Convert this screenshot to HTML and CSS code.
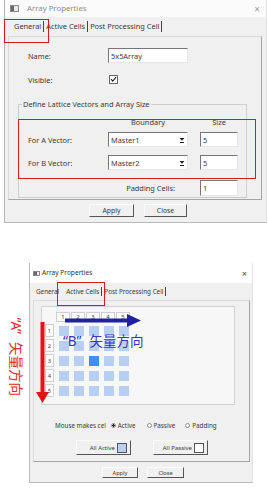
FILE: index.html
```html
<!DOCTYPE html>
<html>
<head>
<meta charset="utf-8">
<title>Array Properties</title>
<link rel="stylesheet" href="styles.css">
</head>
<body>
<div class="page">
  <div class="dlg dlg1">
    <div class="tb">
      <span class="ico"></span><span class="ttl">Array Properties</span><span class="x">×</span>
    </div>
    <div class="tabs">
      <span class="tab">General</span><span class="tab">Active Cells</span><span class="tab">Post Processing Cell</span>
    </div>
    <div class="panel">
      <div class="row"><span class="lbl">Name:</span><span class="inp w80">5x5Array</span></div>
      <div class="row vis"><span class="lbl">Visible:</span><span class="chk"><svg width="7" height="7" viewBox="0 0 7 7"><path d="M1 3.2 L2.8 5.2 L6 1.2" fill="none" stroke="#222" stroke-width="1.1"/></svg></span></div>
      <fieldset class="group">
        <legend>Define Lattice Vectors and Array Size</legend>
        <div class="grow ghead"><span></span><span class="ctr">Boundary</span><span class="ctr">Size</span></div>
        <div class="grow ga">
          <span>For A Vector:</span>
          <span class="inp combo">Master1<svg class="dd" width="6" height="6" viewBox="0 0 6 6"><path d="M0.5 1 H5.5 L3 3.8 Z" fill="#222"/><rect x="1" y="5" width="4" height="1" fill="#222"/></svg></span>
          <span class="inp">5</span>
        </div>
        <div class="grow gb">
          <span>For B Vector:</span>
          <span class="inp combo">Master2<svg class="dd" width="6" height="6" viewBox="0 0 6 6"><path d="M0.5 1 H5.5 L3 3.8 Z" fill="#222"/><rect x="1" y="5" width="4" height="1" fill="#222"/></svg></span>
          <span class="inp">5</span>
        </div>
        <div class="grow gp">
          <span class="padl">Padding Cells:</span>
          <span class="inp tall">1</span>
        </div>
      </fieldset>
    </div>
    <div class="btns b1">
      <span class="btn w45">Apply</span><span class="btn w43">Close</span>
    </div>
  </div>

  <div class="dlg dlg2">
    <div class="tb">
      <span class="ico"></span><span class="ttl">Array Properties</span><span class="x">×</span>
    </div>
    <div class="tabs">
      <span class="tab nob">General</span><span class="tab">Active Cells</span><span class="tab">Post Processing Cell</span>
    </div>
    <div class="panel">
      <div class="gridbox">
        <div class="cg">
          <span></span><span class="ch">1</span><span class="ch">2</span><span class="ch">3</span><span class="ch">4</span><span class="ch">5</span>
          <span class="rh">1</span><span class="c"></span><span class="c"></span><span class="c"></span><span class="c"></span><span class="c"></span>
          <span class="rh">2</span><span class="c"></span><span class="c"></span><span class="c"></span><span class="c"></span><span class="c"></span>
          <span class="rh">3</span><span class="c"></span><span class="c"></span><span class="c on"></span><span class="c"></span><span class="c"></span>
          <span class="rh">4</span><span class="c"></span><span class="c"></span><span class="c"></span><span class="c"></span><span class="c"></span>
          <span class="rh">5</span><span class="c"></span><span class="c"></span><span class="c"></span><span class="c"></span><span class="c"></span>
        </div>
      </div>
      <div class="radios">
        <span>Mouse makes cel</span>
        <span class="rad ra"><span class="circ sel"></span>Active</span>
        <span class="rad rp"><span class="circ"></span>Passive</span>
        <span class="rad rd"><span class="circ"></span>Padding</span>
      </div>
      <div class="allbtns">
        <span class="btn abtn">All Active<span class="sw blue"></span></span>
        <span class="btn abtn">All Passive<span class="sw"></span></span>
      </div>
    </div>
    <div class="btns b2">
      <span class="btn w36">Apply</span><span class="btn w37">Close</span>
    </div>
  </div>

  <span class="redbox r1"></span>
  <span class="redbox r2"></span>
  <span class="redbox r3"></span>

  <svg class="barrow" width="78" height="13" viewBox="0 0 78 13"><rect x="1" y="4.5" width="64" height="4" fill="#1f1fa6"/><path d="M63 0 L77 6.5 L63 13 Z" fill="#1f1fa6"/></svg>
  <svg class="rarrow" width="13" height="81" viewBox="0 0 13 81"><rect x="4.5" y="0" width="4" height="72" fill="#e41414"/><path d="M0 70 L13 70 L6.5 81 Z" fill="#e41414"/></svg>
  <span class="btext">“B”<span class="cjk">矢量方向</span></span>
  <span class="atext">“A”<span class="cjk">矢量方向</span></span>
</div>
</body>
</html>
```
FILE: styles.css
```css
* { box-sizing: border-box; }
body { margin: 0; background: #fff; font-family: "Noto Sans", "Open Sans", sans-serif; color: #3a3a3a; }
.page { position: relative; width: 268px; height: 494px; overflow: hidden; }

.dlg { background: #f0f0f0; border-left: 1px solid #b9b9b9; border-bottom: 1px solid #b9b9b9; border-right: 1px solid #e2e2e2; }
.dlg1 { margin-left: 4px; width: 263px; height: 223px; font-size: 7.4px; }
.dlg2 { margin: 40px 0 0 29px; width: 224px; height: 220px; font-size: 6.3px; }

.tb { display: flex; align-items: center; background: #fbfbfb; }
.dlg1 .tb { height: 17px; padding: 0 6px 0 5px; }
.dlg2 .tb { height: 20px; padding: 0 5px 0 3px; background: #fff; }
.ico { display: block; border: 1px solid #8a8a8a; background: linear-gradient(to right, #666 0 3px, #e8e8e8 3px); }
.dlg1 .ico { width: 9px; height: 7px; margin-right: 8px; }
.dlg2 .ico { width: 7px; height: 5px; margin-right: 2px; }
.ttl { line-height: 1; }
.dlg1 .ttl { color: #8c8c8c; font-size: 7.8px; }
.dlg2 .ttl { color: #333; font-size: 6.6px; }
.x { margin-left: auto; line-height: 1; }
.dlg1 .x { color: #9a9a9a; font-size: 10px; }
.dlg2 .x { color: #444; font-size: 9px; }

.tabs { display: flex; align-items: center; }
.dlg1 .tabs { height: 19px; padding-left: 7px; }
.dlg2 .tabs { height: 17px; padding-left: 4px; }
.tab { padding: 0 2px; border-right: 1px solid #444; line-height: 11px; }
.dlg2 .tab { line-height: 9px; }
.tab.nob { border-right: none; margin-right: 3px; }

.panel { background: #f0f0f0; border: 1px solid #dadada; border-right-color: #a4a4a4; border-bottom-color: #a4a4a4; }
.dlg1 .panel { margin-left: 3px; width: 254px; height: 164px; padding: 11px 0 0 9px; }
.dlg2 .panel { margin-left: 3px; width: 217px; height: 162px; padding: 2px 0 0 7px; }

.row { display: flex; align-items: center; height: 15px; padding-left: 10px; }
.row.vis { margin-top: 9px; }
.lbl { width: 80px; }
.inp { height: 15px; background: #fff; border: 1px solid; border-color: #767676 #e6e6e6 #e6e6e6 #767676; padding-left: 2px; display: flex; align-items: center; }
.w80 { width: 80px; }
.chk { width: 9px; height: 9px; margin-left: 1px; border: 1px solid #666; background: #fff; display: flex; align-items: center; justify-content: center; }

.group { margin: 12px 0 0 0; padding: 0; width: 229px; height: 99px; border: 1px solid #cdcdcd; }
.group legend { margin-left: 3px; padding: 0 1px; line-height: 10px; }
.grow { display: grid; grid-template-columns: 80px 92px 38px; padding-left: 9px; align-items: center; }
.ghead { height: 10px; margin-top: 8px; }
.ctr { text-align: center; }
.ghead .ctr:nth-child(2) { width: 80px; }
.combo { width: 80px; }
.ga { margin-top: 5px; }
.gb { margin-top: 8px; }
.gp { margin-top: 10px; }
.padl { grid-column: 1 / 3; text-align: right; padding-right: 25px; }
.inp.tall { height: 16px; }
.dd { margin-left: auto; margin-right: 2px; }

.btns { display: flex; }
.b1 { margin-top: 4px; padding-left: 84px; gap: 10px; }
.b2 { margin-top: 5px; padding-left: 72px; gap: 9px; }
.btn { display: flex; align-items: center; justify-content: center; background: #f0f0f0; border: 1px solid; border-color: #fafafa #555 #555 #fafafa; }
.b1 .btn { height: 13px; font-size: 6.8px; }
.b2 .btn { height: 11px; font-size: 5.6px; }
.w45 { width: 45px; } .w43 { width: 43px; } .w36 { width: 36px; } .w37 { width: 37px; }

.gridbox { margin-top: 3px; width: 194px; height: 99px; border: 1px solid #d2d2d2; background: #f7f7f7; padding: 5px 0 0 3px; }
.cg { display: grid; grid-template-columns: 11px repeat(5, 15px); grid-template-rows: 11px repeat(5, 15px); font-size: 5.8px; }
.ch { width: 14px; height: 10px; border: 1px solid #d0d0d0; background: #fbfbfb; display: flex; align-items: center; justify-content: center; }
.rh { width: 9px; height: 13px; align-self: center; border: 1px solid #cfcfcf; background: #fff; display: flex; align-items: center; justify-content: center; }
.c { width: 10px; height: 10px; background: #b7cff2; justify-self: center; align-self: center; }
.c.on { background: #3f8ef0; }

.radios { display: flex; align-items: center; height: 10px; margin-top: 15px; padding-left: 14px; }
.rad { display: flex; align-items: center; gap: 2px; }
.ra { margin-left: 5px; }
.rp { margin-left: 11px; }
.rd { margin-left: 10px; }
.circ { width: 5px; height: 5px; border: 1px solid #8a8a8a; border-radius: 50%; background: #fff; }
.circ.sel { background: radial-gradient(circle, #222 0 1px, #fff 1.3px); }

.allbtns { display: flex; gap: 22px; margin-top: 10px; padding-left: 35px; }
.abtn { width: 55px; height: 15px; justify-content: flex-end; padding-right: 3px; gap: 2px; font-size: 6px; }
.sw { width: 10px; height: 10px; border: 1px solid #555; background: #fff; }
.sw.blue { background: #b7cff2; }

.redbox { position: absolute; border: 1px solid #d41c1c; }
.r1 { left: 4px; top: 19px; width: 45px; height: 24px; }
.r2 { left: 18px; top: 119px; width: 238px; height: 60px; }
.r3 { left: 57px; top: 282px; width: 48px; height: 24px; }

.barrow { position: absolute; left: 64px; top: 314px; }
.rarrow { position: absolute; left: 36px; top: 322px; }
.btext, .atext { position: absolute; font-family: "Noto Sans", "Noto Sans CJK SC", sans-serif; font-size: 13.5px; line-height: 18px; white-space: nowrap; }
.cjk { font-family: "Noto Sans CJK SC", sans-serif; margin-left: 8px; }
.btext { left: 63px; top: 331px; color: #3535c8; }
.atext { left: -24px; top: 348px; width: 80px; color: #e02a2a; transform: rotate(90deg); transform-origin: 50% 50%; }
```
